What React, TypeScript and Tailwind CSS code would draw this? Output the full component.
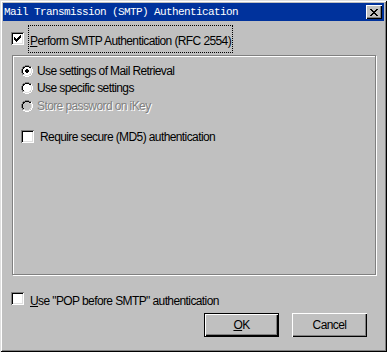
import React from "react";

const ui = { fontFamily: '"Liberation Sans", Arial, sans-serif' };

function CheckBox({ checked }: { checked?: boolean }) {
  return (
    <div className="w-[13px] h-[13px] bg-white shrink-0 shadow-[inset_1px_1px_#808080,inset_-1px_-1px_#fff,inset_2px_2px_#000,inset_-2px_-2px_#dfdfdf] flex items-center justify-center">
      {checked && (
        <svg width="7" height="7" viewBox="0 0 7 7" shapeRendering="crispEdges">
          <path d="M0 2h1v3H0zM1 3h1v3H1zM2 4h1v3H2zM3 3h1v3H3zM4 2h1v3H4zM5 1h1v3H5zM6 0h1v3H6z" fill="#000" />
        </svg>
      )}
    </div>
  );
}

function Radio({ selected, disabled }: { selected?: boolean; disabled?: boolean }) {
  return (
    <svg width="12" height="12" viewBox="0 0 12 12" shapeRendering="crispEdges" className="shrink-0">
      <path d="M4 0h4v1H4zM2 1h2v1H2zM8 1h2v1H8zM1 2h1v2H1zM0 4h1v4H0zM1 8h1v2H1z" fill="#808080" />
      <path d="M4 1h4v1H4zM2 2h2v1H2zM8 2h2v1H8zM2 3h1v1H2zM1 4h1v4H1zM2 8h1v1H2z" fill="#000" />
      <path d="M10 2h1v2h-1zM11 4h1v4h-1zM10 8h1v2h-1zM8 10h2v1H8zM4 11h4v1H4zM2 10h2v1H2z" fill="#fff" />
      <path d="M9 3h1v1H9zM10 4h1v4h-1zM9 8h1v1H9zM8 9h1v1H8zM4 10h4v1H4zM3 9h1v1H3z" fill="#dfdfdf" />
      <path d="M4 2h4v1H4zM3 3h6v1H3zM2 4h8v4H2zM3 8h6v1H3zM4 9h4v1H4z" fill={disabled ? "#c0c0c0" : "#fff"} />
      {selected && <path d="M5 4h2v1H5zM4 5h4v2H4zM5 7h2v1H5z" fill="#000" />}
    </svg>
  );
}

function Label({ children, disabled }: { children: React.ReactNode; disabled?: boolean }) {
  return (
    <span
      className={`text-[12px] leading-[14px] tracking-[-0.6px] whitespace-nowrap ${disabled ? "text-[#808080] [text-shadow:1px_1px_0_#fff]" : "text-black"}`}
      style={ui}
    >
      {children}
    </span>
  );
}

function Button({ children, isDefault }: { children: React.ReactNode; isDefault?: boolean }) {
  return (
    <div
      className={`w-[75px] h-[24px] flex items-center justify-center bg-[#c0c0c0] ${
        isDefault
          ? "border border-black shadow-[inset_1px_1px_#fff,inset_-1px_-1px_#000,inset_-2px_-2px_#808080]"
          : "shadow-[inset_1px_1px_#fff,inset_-1px_-1px_#000,inset_-2px_-2px_#808080]"
      }`}
    >
      <Label>{children}</Label>
    </div>
  );
}

export default function App() {
  return (
    <div className="w-[387px] h-[352px] bg-[#c0c0c0] p-[3px] flex flex-col shadow-[inset_1px_1px_#dfdfdf,inset_-1px_-1px_#000,inset_2px_2px_#fff,inset_-2px_-2px_#808080]">
      {/* Title bar */}
      <div className="h-[18px] bg-[#00329c] flex items-center justify-between pl-[1px] pr-[2px]">
        <span
          className="text-white text-[11px] leading-[12px] tracking-[-0.6px] whitespace-nowrap"
          style={{ fontFamily: '"Liberation Mono", "Courier New", monospace' }}
        >
          Mail Transmission (SMTP) Authentication
        </span>
        <div className="w-[16px] h-[14px] bg-[#c0c0c0] flex items-center justify-center shadow-[inset_1px_1px_#fff,inset_-1px_-1px_#000,inset_-2px_-2px_#808080]">
          <svg width="8" height="7" viewBox="0 0 8 7" shapeRendering="crispEdges">
            <path d="M0 0h2v1H0zM6 0h2v1H6zM1 1h2v1H1zM5 1h2v1H5zM2 2h4v1H2zM3 3h2v1H3zM2 4h4v1H2zM1 5h2v1H1zM5 5h2v1H5zM0 6h2v1H0zM6 6h2v1H6z" fill="#000" />
          </svg>
        </div>
      </div>

      {/* Perform SMTP auth */}
      <div className="flex items-center mt-[11px] ml-[8px] h-[13px]">
        <CheckBox checked />
        <div className="ml-[5px] px-[1px] py-[1px] outline outline-1 outline-dotted outline-black">
          <Label>
            <u>P</u>erform SMTP Authentication (RFC 2554)
          </Label>
        </div>
      </div>

      {/* Group box */}
      <div className="mt-[10px] ml-[9px] w-[364px] h-[220px] border border-[#808080] shadow-[1px_1px_#fff,inset_1px_1px_#fff] pt-[8px] pl-[8px]">
        <div className="flex items-center gap-[4px] h-[13px]">
          <Radio selected />
          <Label>Use settings of Mail Retrieval</Label>
        </div>
        <div className="flex items-center gap-[4px] h-[13px] mt-[4px]">
          <Radio />
          <Label>Use specific settings</Label>
        </div>
        <div className="flex items-center gap-[4px] h-[13px] mt-[5px]">
          <Radio disabled />
          <Label disabled>Store password on iKey</Label>
        </div>
        <div className="flex items-center gap-[6px] h-[13px] mt-[18px]">
          <CheckBox />
          <Label>Require secure (MD5) authentication</Label>
        </div>
      </div>

      {/* POP before SMTP */}
      <div className="flex items-center mt-[17px] ml-[8px] h-[13px]">
        <CheckBox />
        <div className="ml-[6px]">
          <Label>
            <u>U</u>se "POP before SMTP" authentication
          </Label>
        </div>
      </div>

      {/* Buttons */}
      <div className="flex justify-end gap-[13px] mt-[8px] mr-[17px]">
        <Button isDefault>
          <u>O</u>K
        </Button>
        <Button>Cancel</Button>
      </div>
    </div>
  );
}
